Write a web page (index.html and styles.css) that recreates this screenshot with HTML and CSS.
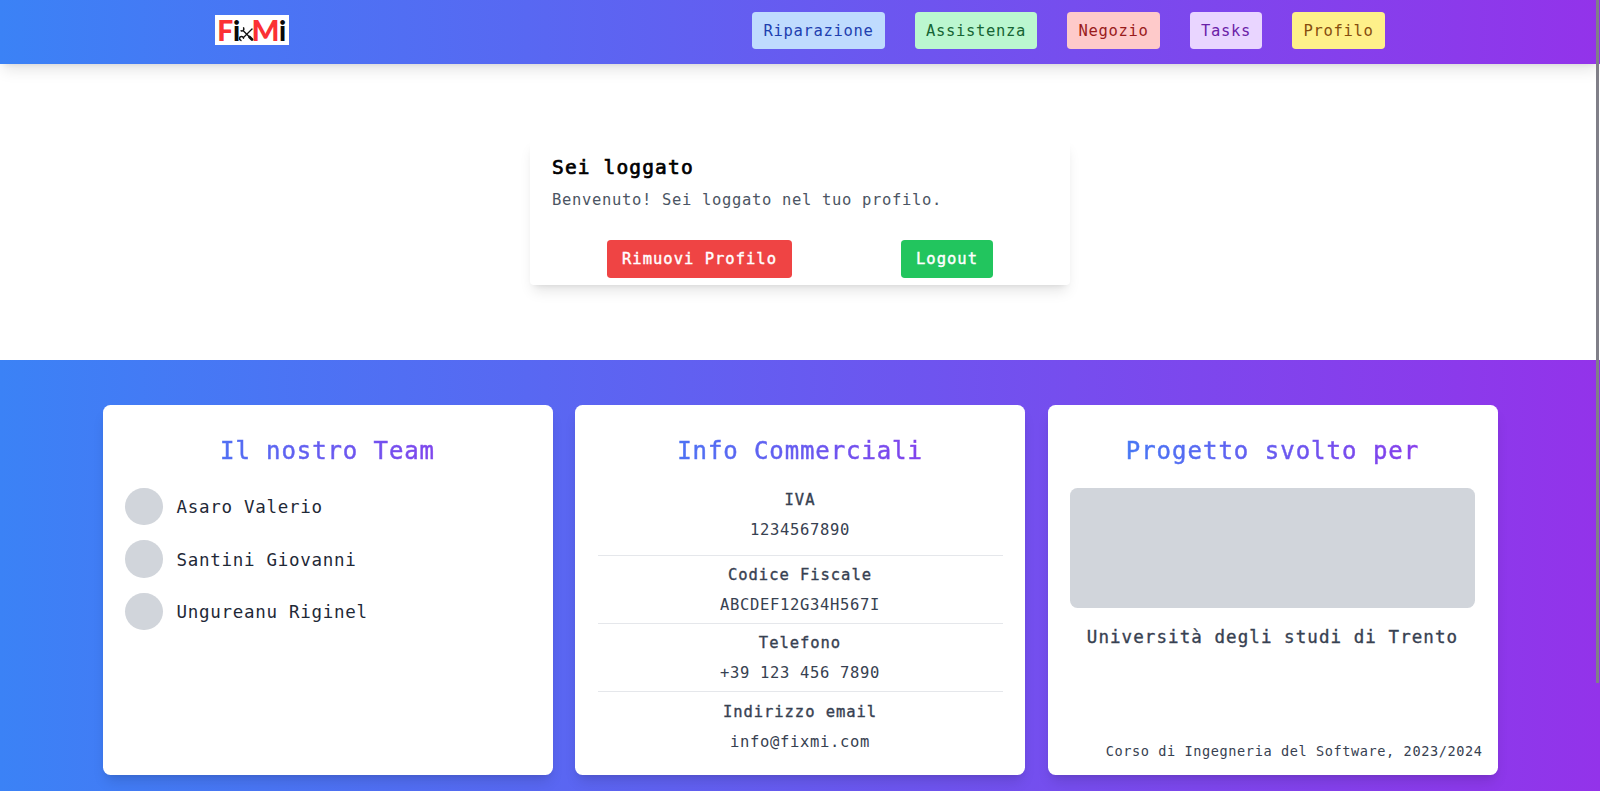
FILE: index.html
```html
<!DOCTYPE html>
<html lang="it">
<head>
<meta charset="utf-8">
<title>FixMi</title>
<link rel="stylesheet" href="styles.css">
</head>
<body>
<header class="header">
  <svg class="logo" viewBox="0 0 74 30" role="img" aria-label="FixMi">
    <rect width="74" height="30" fill="#fff"/>
    <g class="logo-text">
      <text x="2.2" y="26" fill="#fb3034" textLength="16" lengthAdjust="spacingAndGlyphs">F</text>
      <text x="18" y="26" fill="#0a0a0a">i</text>
      <text x="36.4" y="26" fill="#fb3034" textLength="28" lengthAdjust="spacingAndGlyphs">M</text>
      <text x="64" y="26" fill="#0a0a0a">i</text>
    </g>
    <g fill="none" stroke="#111" stroke-linecap="round">
      <path d="M28.5 16 35 22.5" stroke-width="1.4"/>
      <path d="M34.5 22 37 24.5" stroke-width="2.8"/>
      <path d="M37 14 28.5 22.5" stroke-width="1.3"/>
      <path d="M28.6 12.8a2.1 2.1 0 0 1-2.5 3M25.9 25.4a2 2 0 1 1 2.6-2.2" stroke-width="1.5"/>
    </g>
  </svg>
  <nav class="nav">
    <a class="link blue">Riparazione</a>
    <a class="link green">Assistenza</a>
    <a class="link red">Negozio</a>
    <a class="link purple">Tasks</a>
    <a class="link yellow">Profilo</a>
  </nav>
</header>
<main class="main">
  <section class="panel">
    <h1 class="panel-title">Sei loggato</h1>
    <p class="panel-text">Benvenuto! Sei loggato nel tuo profilo.</p>
    <div class="actions">
      <button class="btn btn-remove">Rimuovi Profilo</button>
      <button class="btn btn-logout">Logout</button>
    </div>
  </section>
</main>
<footer class="footer">
  <section class="card">
    <h2 class="card-title">Il nostro Team</h2>
    <ul class="team">
      <li class="member"><span class="avatar"></span><span class="name">Asaro Valerio</span></li>
      <li class="member"><span class="avatar"></span><span class="name">Santini Giovanni</span></li>
      <li class="member"><span class="avatar"></span><span class="name">Ungureanu Riginel</span></li>
    </ul>
  </section>
  <section class="card">
    <h2 class="card-title">Info Commerciali</h2>
    <dl class="info">
      <div class="row row-first"><dt>IVA</dt><dd>1234567890</dd></div>
      <div class="row"><dt>Codice Fiscale</dt><dd>ABCDEF12G34H567I</dd></div>
      <div class="row"><dt>Telefono</dt><dd>+39 123 456 7890</dd></div>
      <div class="row row-last"><dt>Indirizzo email</dt><dd>info@fixmi.com</dd></div>
    </dl>
  </section>
  <section class="card">
    <h2 class="card-title card-title-wide">Progetto svolto per</h2>
    <div class="picture"></div>
    <p class="university">Università degli studi di Trento</p>
    <p class="course">Corso di Ingegneria del Software, 2023/2024</p>
  </section>
</footer>
<div class="scroll-thumb"></div>
</body>
</html>
```
FILE: styles.css
```css
* { box-sizing: border-box; margin: 0; padding: 0; }

body {
  height: 791px;
  overflow: hidden;
  background: #fff;
  color: #374151;
  font: 15.5px/22.5px "DejaVu Sans Mono", monospace;
  letter-spacing: 0.67px;
}

.header {
  position: relative;
  display: flex;
  justify-content: space-between;
  align-items: center;
  height: 64px;
  padding: 0 215px 3px;
  background: linear-gradient(to right, #3b82f6, #9333ea);
  box-shadow: 0 9px 14px -3px rgba(0, 0, 0, .1), 0 4px 6px -4px rgba(0, 0, 0, .1);
}
.logo { width: 74px; height: 30px; margin-bottom: 1px; overflow: visible; }
.logo-text { font: 900 27.5px Lato, sans-serif; letter-spacing: 0; }

.nav { display: flex; gap: 30px; }
.link {
  height: 37.5px;
  padding: 8px 11.5px 7px 11px;
  border-radius: 3.75px;
}
.blue { background: #bfdbfe; color: #1e40af; }
.green { background: #bbf7d0; color: #166534; }
.red { background: #fecaca; color: #991b1b; }
.purple { background: #e9d5ff; color: #6b21a8; }
.yellow { background: #fef08a; color: #854d0e; }

.main { display: flex; justify-content: center; padding: 75px 0; }
.panel {
  width: 540px;
  height: 146px;
  padding: 16px 22.5px 7.5px 22px;
  border-radius: 3.75px;
  background: #fff;
  box-shadow: 0 9px 14px -3px rgba(0, 0, 0, .1), 0 4px 6px -4px rgba(0, 0, 0, .1);
}
.panel-title {
  color: #000;
  font-size: 19.5px;
  font-weight: 400;
  line-height: 26.25px;
  letter-spacing: 1.15px;
  -webkit-text-stroke: 0.7px;
}
.panel-text { margin-top: 7.5px; color: #4b5563; }
.actions { display: flex; justify-content: space-around; margin: 29px 0 0 0.5px; }
.btn {
  height: 37.5px;
  padding: 1px 15px 0;
  border: 0;
  border-radius: 3.75px;
  color: #fff;
  font: inherit;
  letter-spacing: 1px;
  -webkit-text-stroke: 0.4px;
}
.btn-remove { background: #ef4444; }
.btn-logout { background: #22c55e; }

.footer {
  display: grid;
  grid-template-columns: repeat(3, 450px);
  justify-content: center;
  align-items: start;
  gap: 22.5px;
  height: 431px;
  padding-top: 45px;
  background: linear-gradient(to right, #3b82f6, #9333ea);
}
.card {
  display: flex;
  flex-direction: column;
  height: 370px;
  padding: 31px 22.5px 15px;
  border-radius: 7.5px;
  background: #fff;
  box-shadow: 0 9px 14px -3px rgba(0, 0, 0, .12), 0 4px 6px -4px rgba(0, 0, 0, .1);
}
.card-title {
  margin-bottom: 21.5px;
  background: linear-gradient(to right, #3b82f6, #9333ea);
  -webkit-background-clip: text;
  background-clip: text;
  color: transparent;
  font-size: 24px;
  font-weight: 400;
  line-height: 30px;
  letter-spacing: 0.9px;
  text-align: center;
  -webkit-text-stroke: 0.5px transparent;
}
.card-title-wide { letter-spacing: 1px; }

.team { display: flex; flex-direction: column; gap: 15px; list-style: none; }
.member {
  display: flex;
  align-items: center;
  gap: 14px;
  color: #1f2937;
  font-size: 17.5px;
  letter-spacing: 0.71px;
}
.name { padding-top: 2px; }
.avatar { width: 37.5px; height: 37.5px; border-radius: 50%; background: #d1d5db; }

.info { text-align: center; }
.row {
  display: flex;
  flex-direction: column;
  gap: 7.5px;
  height: 68.2px;
  padding-top: 8.5px;
  border-bottom: 1px solid #e5e7eb;
}
.row-first { padding-top: 1px; }
.row-last { border: 0; }
.row dt { letter-spacing: 0.95px; -webkit-text-stroke: 0.35px; }

.picture { height: 120px; border-radius: 7.5px; background: #d1d5db; }
.university {
  margin-top: 18px;
  font-size: 17.5px;
  letter-spacing: 1.07px;
  text-align: center;
  white-space: nowrap;
  -webkit-text-stroke: 0.35px;
}
.course {
  margin: auto -7.5px -1px 0;
  font-size: 13.6px;
  line-height: 18.75px;
  letter-spacing: 0.58px;
  text-align: right;
  white-space: nowrap;
}

.scroll-thumb {
  position: absolute;
  top: 0;
  right: 1px;
  width: 3px;
  height: 683px;
  background: #807f88;
}
```
